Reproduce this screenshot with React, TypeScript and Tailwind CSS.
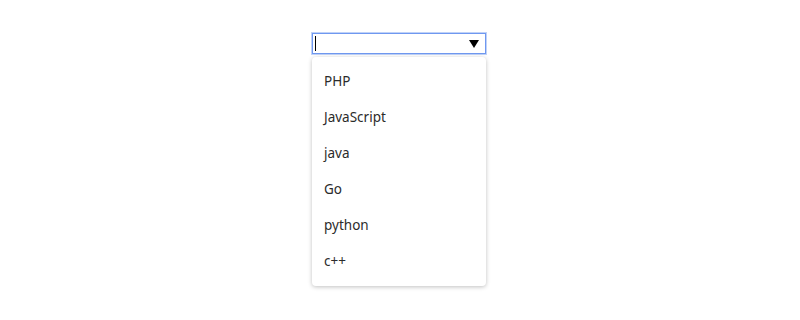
import { useState } from "react";

const languages = ["PHP", "JavaScript", "java", "Go", "python", "c++"];

export default function App() {
  const [value, setValue] = useState("");

  return (
    <div className="flex h-[320px] w-[800px] bg-white pl-[312px] pt-[33px] font-['Noto_Sans',sans-serif]">
      <div className="flex w-[174px] flex-col">
        <div className="flex h-[21px] items-center border border-[#6f98f0] bg-white pl-[2px] pr-[6px] shadow-[0_0_0_1px_rgba(130,165,240,0.5)]">
          {/* fake caret so the focused look shows in a static capture */}
          <span className="h-[15px] w-px shrink-0 bg-black" />
          <input
            value={value}
            onChange={(e) => setValue(e.target.value)}
            className="h-full w-full min-w-0 bg-transparent text-sm text-black outline-none"
          />
          <svg width="10" height="8" viewBox="0 0 10 8" className="shrink-0">
            <path d="M0 0 H10 L5 8 Z" fill="#000" />
          </svg>
        </div>
        <ul className="mt-[3px] rounded-[4px] bg-white pb-[7px] pt-[6px] shadow-[0_1px_4px_rgba(0,0,0,0.25)]">
          {languages.map((lang) => (
            <li
              key={lang}
              className="flex h-[36px] cursor-pointer items-center px-3 text-[13.5px] text-[#2b2b2b]"
            >
              {lang}
            </li>
          ))}
        </ul>
      </div>
    </div>
  );
}
